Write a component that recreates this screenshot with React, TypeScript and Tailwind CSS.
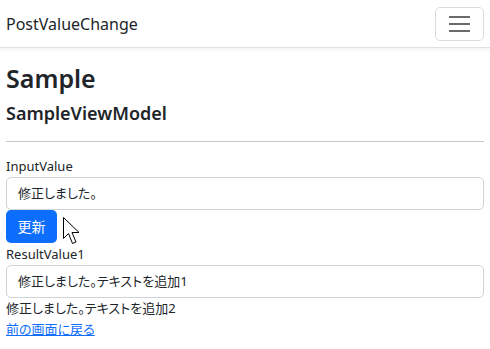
const font = { fontFamily: '"Noto Sans", "Noto Sans CJK JP", sans-serif' };

function Cursor() {
  return (
    <svg
      className="absolute left-[62px] top-[216px]"
      width="20"
      height="30"
      viewBox="0 0 20 30"
    >
      <path
        d="M1.5 1.5 L1.5 22.5 L6.5 17.5 L10.5 27.5 L14 26 L10 16.5 L17 16.5 Z"
        fill="#fff"
        stroke="#000"
        strokeWidth="1"
      />
    </svg>
  );
}

export default function App() {
  return (
    <div
      className="relative h-[349px] w-[490px] overflow-hidden bg-white text-[13px] text-[#212529] [font-feature-settings:'palt']"
      style={font}
    >
      <nav className="flex h-[48px] items-center justify-between border-b border-[#dee2e6] px-[6px] shadow-[0_2px_4px_rgba(0,0,0,0.05)]">
        <span className="text-[16px] leading-none text-[#212529]">PostValueChange</span>
        <button className="flex h-[34px] w-[49px] flex-col items-center justify-center gap-[5px] rounded-[5px] border border-[#dcdcdc]">
          <span className="block h-[2px] w-[21px] bg-[#6b6b6b]" />
          <span className="block h-[2px] w-[21px] bg-[#6b6b6b]" />
          <span className="block h-[2px] w-[21px] bg-[#6b6b6b]" />
        </button>
      </nav>

      <main className="px-[6px] pt-[14px]">
        <h1 className="text-[25px] font-semibold leading-[32px]">Sample</h1>
        <h4 className="mt-[7px] text-[18px] font-semibold leading-[24px]">SampleViewModel</h4>
        <hr className="mt-[16px] mb-[14px] border-t border-[#c8c8c8]" />

        <label className="block leading-[21px]">InputValue</label>
        <div className="flex h-[33px] items-center rounded-[5px] border border-[#ced4da] px-[11px]">
          修正しました。
        </div>
        <button className="flex h-[33px] w-[51px] items-center justify-center rounded-[5px] bg-[#0d6efd] text-[14px] text-white">
          更新
        </button>

        <label className="mt-[1px] block leading-[21px]">ResultValue1</label>
        <div className="flex h-[33px] items-center rounded-[5px] border border-[#ced4da] px-[11px]">
          修正しました。テキストを追加1
        </div>
        <p className="leading-[21px]">修正しました。テキストを追加2</p>
        <a className="text-[#0d6efd] underline leading-[21px]">前の画面に戻る</a>
      </main>
      <Cursor />
    </div>
  );
}
